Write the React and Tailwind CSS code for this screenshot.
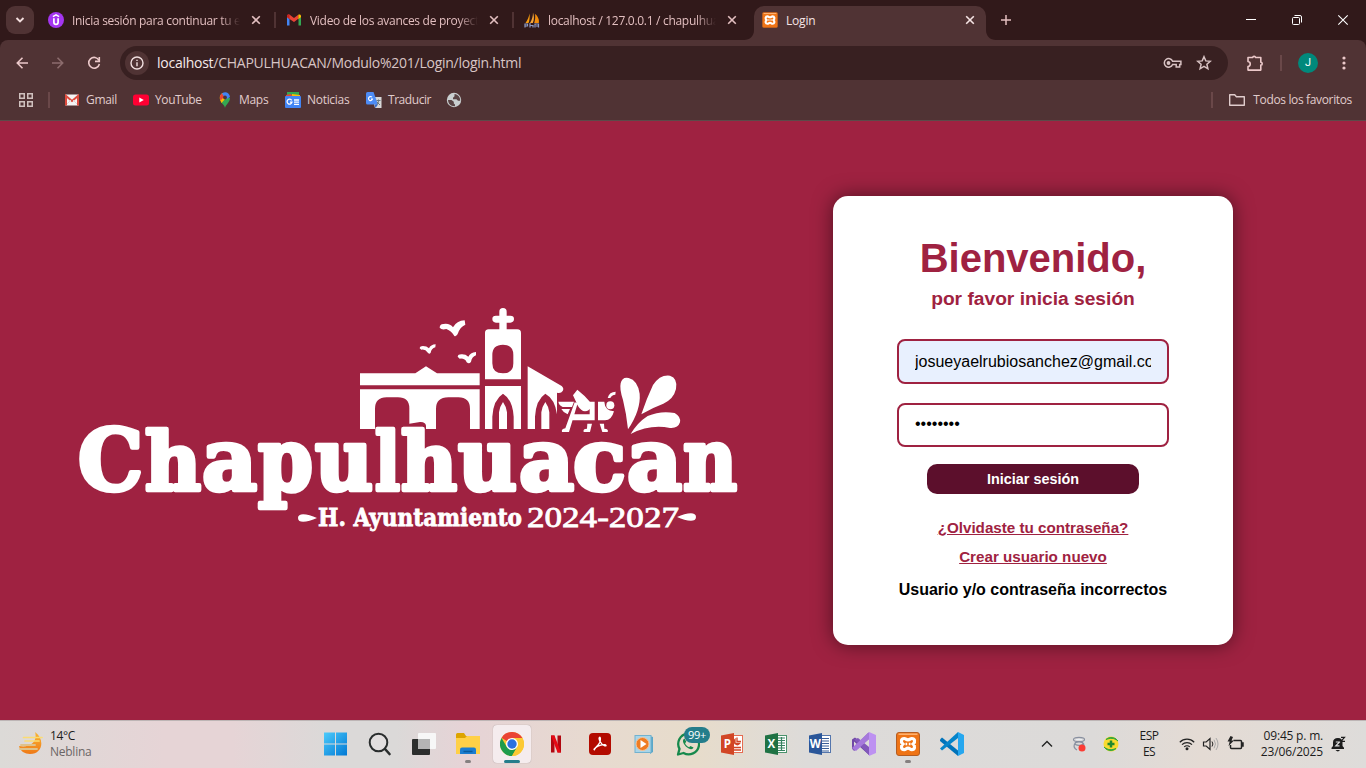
import React from "react";

function Svg({ w = 24, h = w, vb, className = "", children }) {
  return (
    <svg width={w} height={h} viewBox={vb || `0 0 ${w} ${h}`} fill="none" className={`shrink-0 ${className}`}>
      {children}
    </svg>
  );
}

/* ---------- Favicons ---------- */

const UdemyIcon = () => (
  <Svg w={16}>
    <circle cx="8" cy="8" r="8" fill="#a435f0" />
    <path d="M4.900 4.700 8 2.900l3.100 1.800" stroke="#fff" strokeWidth="1.500" />
    <path d="M5.900 6.200v4c0 1.500.8 2.200 2.100 2.200s2.100-.7 2.100-2.200v-4" stroke="#fff" strokeWidth="1.700" />
  </Svg>
);

const GmailIcon = () => (
  <Svg w={16}>
    <path d="M1 13.500h2.500V7L1 5z" fill="#4285f4" />
    <path d="M12.500 13.500H15V5l-2.500 2z" fill="#34a853" />
    <path d="M1 5.200V4c0-1.600 1.600-2 2.700-1.200L8 6l4.300-3.200v4L8 10 3.500 6.900z" fill="#ea4335" />
    <path d="M12.300 2.800C13.400 2 15 2.400 15 4v1.200l-2.700 2z" fill="#fbbc04" />
    <path d="M1 4.800 3.500 6.900V2.700C2.500 2.200 1 2.700 1 4z" fill="#c5221f" />
  </Svg>
);

const PhpMyAdminIcon = () => (
  <Svg w={16}>
    <path d="M1.500 11C3.500 8 5 5 5.500 1.500 6 5 5.500 9 4.500 11z" fill="#f89c0e" />
    <path d="M6 11C8 8 9 4 9 .5c1 3 1.500 7-.2 10.500z" fill="#f9a83a" />
    <path d="M11 2c3 2 4.500 6 3.800 9h-4.600c1-3 1.300-6 .8-9z" fill="#f28c0a" />
    <path d="M1 15.500V12h2.500v2H1.500M6 15.500V11m0 2.500h3v2M11 15.500V12h3.500v2H12M14.500 12v3.500" stroke="#8d9ac4" strokeWidth="1.200" />
  </Svg>
);

function XamppIcon({ size }) {
  return (
    <Svg w={size} vb="0 0 24 24">
      <rect x=".5" y=".5" width="23" height="23" rx="2.500" fill="#ef7416" stroke="#b45d22" />
      <path d="M2.500 2.200h19" stroke="#ffb87a" strokeWidth="1.400" />
      <path
        d="M8.200 6.500c-3 0-3.800 3.400-1.400 5.500-2.400 2.200-1.500 5.700 1.400 5.700 1.700 0 1.800-1.500 3.800-1.500s2.100 1.500 3.800 1.500c2.900 0 3.800-3.500 1.400-5.700 2.400-2.100 1.600-5.500-1.400-5.500-1.700 0-1.800 1.400-3.800 1.400S9.900 6.500 8.200 6.500z"
        stroke="#fff" strokeWidth="3.200"
      />
      <path d="M9.500 12h1.700m1.600 0h1.700" stroke="#fff" strokeWidth="2.400" />
    </Svg>
  );
}

const CloseX = ({ color }) => (
  <Svg w={10} className={color}>
    <path d="m1.200 1.200 7.600 7.600m0-7.600-7.600 7.600" stroke="currentColor" strokeWidth="1.600" />
  </Svg>
);

/* ---------- Browser chrome ---------- */

function Tab({ icon, width, last, children }) {
  return (
    <div className={`flex h-[40px] shrink-0 items-center pl-[10px] text-[#e3bfc0] ${width}`}>
      {icon}
      <div className="ml-2 w-[168px] overflow-hidden whitespace-nowrap pt-[2px] text-[12px] tracking-[-0.300px] [mask-image:linear-gradient(to_right,black_148px,transparent_168px)]">
        {children}
      </div>
      <div className="ml-[11px] flex w-[10px]">
        <CloseX color="text-[#e3bfc0]" />
      </div>
      {!last && <div className="ml-[13px] h-4 w-[2px] shrink-0 bg-[#503334]" />}
    </div>
  );
}

function TabStrip() {
  return (
    <div className="flex h-[40px] items-center bg-[#31191a]">
      <div className="ml-[6px] mr-[4px] flex h-7 w-7 shrink-0 items-center justify-center rounded-[9px] bg-[#503334]">
        <Svg w={10} h={6}>
          <path d="m1.500 1 3.500 3.500L8.500 1" stroke="#f3dede" strokeWidth="1.900" />
        </Svg>
      </div>
      <Tab width="w-[238px]" icon={<UdemyIcon />}>Inicia sesión para continuar tu experiencia</Tab>
      <Tab width="w-[238px]" icon={<GmailIcon />}>Video de los avances de proyecto</Tab>
      <Tab width="w-[230px]" icon={<PhpMyAdminIcon />} last>localhost / 127.0.0.1 / chapulhuacan</Tab>
      <div className="flex shrink-0 items-end self-end">
        <Svg w={10}><path d="M10 0v10H0C6 10 10 6 10 0z" fill="#503334" /></Svg>
        <div className="flex h-[34px] w-[232px] items-center rounded-t-[10px] bg-[#503334] pb-[6px] pl-2 text-[12px] text-[#f5e4e4]">
          <XamppIcon size={16} />
          <span className="ml-2 pt-[2px] tracking-[-0.200px]">Login</span>
          <div className="ml-auto mr-[11px]"><CloseX color="text-[#f5e4e4]" /></div>
        </div>
        <Svg w={10}><path d="M0 0v10h10C4 10 0 6 0 0z" fill="#503334" /></Svg>
      </div>
      <Svg w={12} className="ml-1">
        <path d="M6 1v10M1 6h10" stroke="#e3bfc0" strokeWidth="1.500" />
      </Svg>
      <div className="ml-auto flex">
        <div className="flex w-[46px] justify-center"><Svg w={12}><path d="M1 5.500h10" stroke="#fff" /></Svg></div>
        <div className="flex w-[46px] justify-center">
          <Svg w={12}>
            <rect x="1.500" y="3.500" width="7" height="7" rx="1" stroke="#fff" />
            <path d="M3.500 1.500H9A1.500 1.500 0 0 1 10.500 3v5.500" stroke="#fff" />
          </Svg>
        </div>
        <div className="flex w-[46px] justify-center"><Svg w={12}><path d="m1.300 1.300 9.400 9.400m0-9.400-9.400 9.400" stroke="#fff" strokeWidth="1.100" /></Svg></div>
      </div>
    </div>
  );
}

function Toolbar() {
  return (
    <div className="bg-[#31191a]">
      <div className="flex h-[40px] items-start rounded-t-[8px] bg-[#503334] pt-[6px]">
        <div className="flex h-[34px] w-[120px] items-center pl-4">
          <Svg w={12}><path d="M6.500.8 1.300 6l5.200 5.200M1.500 6H12" stroke="#ecc9ca" strokeWidth="1.600" /></Svg>
          <Svg w={12} className="ml-6"><path d="M5.500.8 10.700 6l-5.200 5.200M10.500 6H0" stroke="#8c6c6d" strokeWidth="1.600" /></Svg>
          <Svg w={14} className="ml-[23px]">
            <path d="M12 4.400A5.400 5.400 0 1 0 12.400 8" stroke="#ecc9ca" strokeWidth="1.600" />
            <path d="M12.300 1v4.400H8" stroke="#ecc9ca" strokeWidth="1.600" />
          </Svg>
        </div>
        <div className="flex h-[34px] w-[1108px] items-center rounded-full bg-[#382021] pl-[5px] pr-4">
          <div className="flex h-6 w-6 items-center justify-center rounded-full bg-[#503334]">
            <Svg w={14}>
              <circle cx="7" cy="7" r="6" stroke="#f0dfdf" strokeWidth="1.400" />
              <path d="M7 6.200V10.200M7 3.800v1.300" stroke="#f0dfdf" strokeWidth="1.400" />
            </Svg>
          </div>
          <div className="ml-2 whitespace-nowrap pb-px text-[14px] tracking-[-0.260px] text-[#d8c5c5]"><span className="text-[#f5eaea]">localhost</span>/CHAPULHUACAN/Modulo%201/Login/login.html</div>
          <Svg w={19} h={12} className="ml-auto">
            <path d="M9.600 4.300h8.300v3.200h-1.200v2.500h-3.500V7.500H9.600A4.300 4.300 0 1 1 9.600 4.300z" stroke="#d8c2c3" strokeWidth="1.500" />
            <circle cx="5.500" cy="6" r="1.900" fill="#d8c2c3" />
          </Svg>
          <Svg w={16} className="ml-[14px]">
            <path d="m8 1.700 1.800 4.200 4.500.4-3.400 3 1 4.500L8 11.400l-3.900 2.400 1-4.500-3.400-3 4.500-.4z" stroke="#d8c2c3" strokeWidth="1.500" />
          </Svg>
        </div>
        <div className="flex h-[34px] items-center pl-[18px]">
          <Svg w={18} className="-mt-px">
            <path d="M2 3.500h4.800a1.200 1.200 0 0 1 2.600 0h5.400v4.800a1.400 1.400 0 0 1 0 2.800v5H2v-3.600c3-.5 3-4.500 0-5z" stroke="#ecc9ca" strokeWidth="1.600" strokeLinejoin="round" />
          </Svg>
          <div className="ml-4 h-4 w-[2px] bg-[#6a4849]" />
          <div className="ml-4 flex h-5 w-5 items-center justify-center rounded-full bg-[#00897b] font-['Roboto',sans-serif] text-[11px] text-white">J</div>
          <Svg w={4} h={16} className="ml-6">
            <circle cx="2" cy="3" r="1.600" fill="#ecc9ca" /><circle cx="2" cy="8" r="1.600" fill="#ecc9ca" /><circle cx="2" cy="13" r="1.600" fill="#ecc9ca" />
          </Svg>
        </div>
      </div>
    </div>
  );
}

function Bookmarks() {
  return (
    <div className="flex h-[41px] items-center border-b border-[#5c4a49] bg-[#503334] pl-[18px] pr-[14px] text-[12px] text-[#e0cccc]">
      <Svg w={16}>
        <path d="M1.750 1.750h4.500v4.500h-4.500zM9.750 1.750h4.500v4.500h-4.500zM1.750 9.750h4.500v4.500h-4.500zM9.750 9.750h4.500v4.500h-4.500z" stroke="#cfc1be" strokeWidth="1.500" />
      </Svg>
      <div className="ml-[14px] h-4 w-[2px] bg-[#6a4849]" />
      <div className="flex w-[83px] items-center pl-[14px]">
        <Svg w={16}>
          <rect x="1" y="2.500" width="14" height="11" rx="1" fill="#f4f4f4" />
          <path d="M2 13.500V4l6 5 6-5v9.500" stroke="#dd4b3e" strokeWidth="2" />
          <path d="m3 12 4-4m6 4L9 8" stroke="#d8d8d8" />
        </Svg>
        <span className="ml-[6px] tracking-[-0.300px]">Gmail</span>
      </div>
      <div className="flex w-[84px] items-center">
        <Svg w={16}><rect y="2.500" width="16" height="11" rx="2.500" fill="#ff0033" /><path d="m6.300 5.500 4.500 2.500-4.500 2.500z" fill="#fff" /></Svg>
        <span className="ml-[6px] tracking-[-0.400px]">YouTube</span>
      </div>
      <div className="flex w-[68px] items-center">
        <Svg w={16}>
          <path d="M8 16c.3-3 5-5.500 5-10L8 6 4 10c2 2.500 3.500 3.500 4 6z" fill="#34a853" />
          <path d="M3.300 8.500C2 5.500 3.300 2 5.500 1l4.500 4-5.500 6z" fill="#fbbc04" />
          <path d="M3.500 8.500C2 4.500 4 2 5 1.500L8 4z" fill="#ea4335" />
          <path d="M5 1.500C8-1 12.500.5 13 5L9 7.500z" fill="#4285f4" />
          <circle cx="8" cy="5.500" r="1.900" fill="#503334" />
        </Svg>
        <span className="ml-[6px] tracking-[-0.300px]">Maps</span>
      </div>
      <div className="flex w-[81px] items-center">
        <Svg w={16}>
          <path d="M2 0h12v7H2z" fill="#34a853" /><path d="m7 2 8 1v4H7z" fill="#fbbc04" /><path d="m1 3 5-1 3 5H1z" fill="#ea4335" />
          <rect y="4" width="16" height="12" rx="1" fill="#4285f4" />
          <path d="M6.700 8.300A2.500 2.500 0 1 0 7 10.200H5M9 8h5M9 10.200h5M9 12.400h5" stroke="#fff" strokeWidth="1.300" />
        </Svg>
        <span className="ml-[6px] tracking-[-0.300px]">Noticias</span>
      </div>
      <div className="flex w-[80px] items-center">
        <Svg w={16}>
          <path d="M6 5h9.500v11H9z" fill="#d7d7d7" />
          <path d="M0 1.500Q0 0 1.500 0h6L12 12.500H1.500Q0 12.500 0 11z" fill="#4d8cf5" />
          <path d="M6 5.200A2 2 0 1 0 6.500 7H5" stroke="#fff" strokeWidth="1.100" />
          <path d="M10.500 8.500h4M12.500 7.500v1c0 2-1 3.500-2 4.500m.5-3 3 3" stroke="#687a82" />
          <path d="m8.500 12.500 1 3.500 2.500-3.500z" fill="#3569c8" />
        </Svg>
        <span className="ml-[6px] tracking-[-0.450px]">Traducir</span>
      </div>
      <Svg w={16}>
        <circle cx="8" cy="8" r="7.200" fill="#c9cfd0" />
        <path d="M2 8h3.500l2.300 1.800v1.700l1.200 1v1.700C5 14.500 2.200 12 2 8zM8.500 2v2.200L7 5.800v1.400h3.500l1.500 1.600h2.200c.2-3.300-2-6.300-5.700-6.800z" fill="#594445" />
      </Svg>
      <div className="ml-auto h-4 w-[2px] bg-[#6a4849]" />
      <Svg w={18} h={16} className="ml-[15px]">
        <path d="M1.700 2.700h5l1.700 2h7.900v8.600H1.700z" stroke="#e0cccc" strokeWidth="1.400" strokeLinejoin="round" />
      </Svg>
      <span className="ml-[7px] whitespace-nowrap tracking-[-0.350px]">Todos los favoritos</span>
    </div>
  );
}

/* ---------- Municipal logo ---------- */

const LETTERS = [
  ["C", 78, 65, 84], ["h", 145, 56, 81], ["a", 202, 55, 86], ["p", 258, 55, 86], ["u", 315, 58, 86], ["l", 375, 25, 81],
  ["h", 401, 56, 81], ["u", 458, 59, 86], ["a", 519, 55, 86], ["c", 573, 53, 86], ["a", 627, 55, 86], ["n", 683, 54, 86],
];

function Logo() {
  return (
    <svg width="680" height="240" viewBox="70 300 680 240" className="shrink-0">
      <g transform="translate(340 295) scale(.33333)" fill="#fff">
        <path d="M60 235H226L258 214 291 235H419V271H60zM60 283H419V402H390V342Q390 307 355 307H325Q288 307 288 342V402H258V392Q256 380 240 381L208 386V340Q208 307 174 307H140Q105 307 105 342V402H60z" />
        <path fillRule="evenodd" d="M446 103H478V83H468Q457 82 457 72 457 62 468 62H478V50Q478 39 489 39 500 39 500 50V62H511Q522 62 522 72 522 82 511 83H500V103H532Q543 103 543 114V253H435V114Q435 103 446 103zM457 180V205Q457 235 489 235 520 235 520 205V180Q520 149 489 149 457 149 457 180z" />
        <path fillRule="evenodd" d="M435 273H543V402H521V365Q518 314 489 296 460 314 457 365V402H435zM477 402V352Q480 333 489 321 498 333 501 352V402z" />
        <path d="M563 214 665 273Q673 280 668 288 663 296 651 293V358Q645 312 616 296 588 314 585 365V402H563zM604 402V352Q607 333 616 321 625 333 628 352V402z" />
        <path d="M299 98Q299 88 310 87 330 84 339 97 350 77 374 76L376 89Q360 96 354 115 350 126 343 123 335 108 319 102 305 106 299 98zM239 160Q240 153 249 153 260 153 267 160 272 149 287 148L286 157Q274 161 272 173 268 180 262 172 257 162 244 164zM353 185Q354 178 364 178 376 177 385 185 390 173 408 171L408 181Q396 185 393 200 388 209 380 202 375 189 359 191z" />
        <path d="M842 265Q846 245 866 249 893 256 899 296 903 345 864 403 859 355 849 315 838 282 842 265zM904 358Q920 310 939 270 960 238 990 242 1014 250 1008 282 1001 312 970 326 937 338 904 358zM872 417Q893 382 923 363 962 346 1004 354 1023 365 1020 382 1014 401 990 399 930 387 872 417z" />
        <path d="M655 320H702L696 336H668Q657 331 655 320zM664 342H690L683 358Q670 353 664 342zM712 284Q733 300 751 322V336Q748 349 735 349 723 348 714 333L699 301zM697 358H764V376H692zM749 320H764V364H749zM774 320H793Q794 346 822 349 815 376 795 376H774zM803 309Q808 290 827 290L826 299Q815 300 811 309zM704 322 713 325 687 411H666Q663 402 676 400zM742 386H756L750 411H731Q728 401 741 401zM779 386H792L793 401Q807 402 803 411H787z" />
        <circle cx="811" cy="331" r="12" />
      </g>
      <g fill="#fff" stroke="#fff" strokeWidth="4.500" strokeLinejoin="round" className="font-['DejaVu_Serif',serif] font-bold">
        {LETTERS.map(([ch, x, w, size], i) => (
          <text key={i} x={x} y="490" fontSize={size} textLength={w} lengthAdjust="spacingAndGlyphs">{ch}</text>
        ))}
      </g>
      <text x="318" y="525.500" fontSize="24" textLength="204" lengthAdjust="spacingAndGlyphs" fill="#fff" stroke="#fff" strokeWidth=".8" className="font-['DejaVu_Serif',serif] font-bold">H. Ayuntamiento</text>
      <text x="527" y="527" fontSize="30" textLength="152" lengthAdjust="spacingAndGlyphs" fill="#fff" stroke="#fff" strokeWidth=".8" className="font-['Liberation_Serif',serif]">2024-2027</text>
      <path d="M317 518C308 514 298 512 298 518S308 522 317 518zM677 517C686 513 696 511 696 517S686 521 677 517z" fill="#fff" />
    </svg>
  );
}

/* ---------- Login page ---------- */

function LoginPage() {
  return (
    <main className="flex h-[599px] items-start overflow-hidden bg-[#9f2241] font-['Liberation_Sans',Arial,sans-serif]">
      <div className="w-[833px] pl-[70px] pt-[179px]"><Logo /></div>
      <section className="mt-[75px] flex h-[449px] w-[400px] flex-col items-center rounded-[15px] bg-white pt-[39px] text-[#9f2241] shadow-[0_0_20px_rgba(0,0,0,0.5)]">
        <h1 className="text-[40px] font-bold leading-[46px]">Bienvenido,</h1>
        <h3 className="mt-[7px] text-[19.200px] font-bold leading-[22px]">por favor inicia sesión</h3>
        <div className="mt-[29px] flex h-[45px] w-[272px] items-center rounded-[8px] border-2 border-[#9f2241] bg-[#e8f0fe] px-4 text-[16px] text-black">
          <div className="overflow-hidden whitespace-nowrap">josueyaelrubiosanchez@gmail.com</div>
        </div>
        <div className="mt-[19px] flex h-[44px] w-[272px] items-center rounded-[8px] border-2 border-[#9f2241] px-4 pb-[2px] text-[16px] text-black">••••••••</div>
        <button className="mt-[17px] h-[30px] w-[212px] rounded-[10px] bg-[#5c0f2c] text-[14.400px] font-bold leading-[30px] text-white">Iniciar sesión</button>
        <a className="mt-[25px] text-[15.200px] font-bold leading-[18px] underline">¿Olvidaste tu contraseña?</a>
        <a className="mt-[11px] text-[15.200px] font-bold leading-[18px] underline">Crear usuario nuevo</a>
        <p className="mt-[15px] text-[16px] font-bold leading-[18px] text-black">Usuario y/o contraseña incorrectos</p>
      </section>
    </main>
  );
}

/* ---------- Taskbar ---------- */

function OfficeIcon({ letter, color, dark, children }) {
  return (
    <Svg w={24}>
      <rect x="11" y="3.500" width="11.500" height="17" fill="#fff" stroke={color} />
      {children}
      <path d="M1 3.500 14 1v22L1 20.500z" fill={dark} />
      <text x="7.400" y="16" textAnchor="middle" fontSize="11.500" fill="#fff" className="font-['Open_Sans',sans-serif] font-bold">{letter}</text>
    </Svg>
  );
}

function Slot({ active, dot, children }) {
  return (
    <div className="flex w-11 justify-center">
      <div className={`relative flex h-[38px] w-[38px] items-center justify-center rounded-[4px] ${active ? "bg-[#f5ecee] shadow-[0_0_1px_rgba(0,0,0,0.350)]" : ""}`}>
        {children}
        {active && <div className="absolute bottom-0 h-[3px] w-4 rounded-full bg-[#247d8b]" />}
        {dot && <div className="absolute bottom-0 h-[3px] w-[6px] rounded-full bg-[#858080]" />}
      </div>
    </div>
  );
}

function Taskbar() {
  return (
    <footer className="flex h-[48px] items-center border-t border-[#bdb5b5] bg-[linear-gradient(90deg,#dcdad7_0%,#e6d4d6_12%,#e6d4d6_17%,#dbd9d8_24%,#dbd9d8_29%,#e6d3d6_34%,#e7dacf_44%,#e7dccb_51%,#dddbd9_59%,#dcdad9_80%,#e4dbd4_88%,#dedcda_100%)] pb-px text-[#1c1c1c]">
      <div className="flex w-[314px] items-center pl-[18px]">
        <Svg w={26}>
          <defs><linearGradient id="moon" x1="0" y1="0" x2="0" y2="1"><stop stopColor="#f9b633" /><stop offset="1" stopColor="#ef7917" /></linearGradient></defs>
          <path d="M17 1c10 7 8 22-5 22C7 23 2 20 1 15c11 2 19-4 16-14z" fill="url(#moon)" />
          <path d="M5.500 6.500H24M7 10h14" stroke="#fbdc72" strokeWidth="1.700" strokeLinecap="round" />
          <path d="M3 14h14M2 18h17" stroke="#dfc28a" strokeWidth="1.900" strokeLinecap="round" />
        </Svg>
        <div className="-mt-px ml-[6px] text-[12px] leading-[16px]">
          <div className="tracking-[-0.400px]">14°C</div>
          <div className="tracking-[-0.250px] text-[#6b6666]">Neblina</div>
        </div>
      </div>
      <Slot>
        <Svg w={24}>
          <defs><linearGradient id="win" x1="0" y1="0" x2="1" y2="1"><stop stopColor="#4ccbfb" /><stop offset="1" stopColor="#0078d4" /></linearGradient></defs>
          <path d="M0 .5h11v11H0zM12 .5h11v11H12zM0 12.500h11v11H0zM12 12.500h11v11H12z" fill="url(#win)" />
        </Svg>
      </Slot>
      <Slot>
        <Svg w={24}><circle cx="10.500" cy="10.500" r="8.800" fill="#e2dfdf" stroke="#292d2d" strokeWidth="2" /><path d="m17 17 4.500 5" stroke="#292d2d" strokeWidth="2.600" strokeLinecap="round" /></Svg>
      </Slot>
      <Slot>
        <Svg w={24}><rect y="7" width="18" height="16" rx="1" fill="#2c2e2d" /><rect x="6" y="1" width="18" height="16" rx="1" fill="#f7f7f7" /><path d="M6 7h12v10H6z" fill="#b4b4b4" /></Svg>
      </Slot>
      <Slot dot>
        <Svg w={24}>
          <path d="M0 2.500Q0 1 1.500 1H8l2 3h14v17.500H0z" fill="#dda400" />
          <path d="M0 6h9l2-2h13v18H0z" fill="#ffd047" />
          <path d="M4 22v-4.500Q4 15.500 6 15.500h12q2 0 2 2V22z" fill="#1b7dd0" /><path d="M7.500 19.500h9" stroke="#095a9d" strokeWidth="1.500" />
        </Svg>
      </Slot>
      <Slot active>
        <Svg w={24} vb="0 0 24 24">
          <circle cx="12" cy="12" r="12" fill="#fcc934" />
          <path d="M12 12 1.600 6A12 12 0 0 1 22.400 6H12z" fill="#ea4335" />
          <path d="M12 24A12 12 0 0 1 1.600 6l5.200 9 5.200 3 5.200-3z" fill="#1e9b4c" />
          <path d="M12 24 17.200 15 18 10 12 6h10.400A12 12 0 0 1 12 24z" fill="#fcc934" />
          <circle cx="12" cy="12" r="6" fill="#fff" /><circle cx="12" cy="12" r="4.700" fill="#2b70df" />
        </Svg>
      </Slot>
      <Slot>
        <Svg w={24}><path d="M7 3.500h3.500v17H7zM13.500 3.500H17v17h-3.500z" fill="#b00710" /><path d="M7 3.500h3.500l6.500 17h-3.500z" fill="#e50914" /></Svg>
      </Slot>
      <Slot>
        <Svg w={24}>
          <rect x="1" y="1" width="22" height="22" rx="4" fill="#b30b00" />
          <path d="M6.300 17.800c-1.500-1 4-3.300 5.400-7.300C12.800 7 12.500 5 11.600 5.300c-1.500 1 1 7.200 5.200 8.500 2 .5 1.500-1.200-.5-1.100-4 .3-8.500 2.100-10 5.100z" stroke="#fff" strokeWidth="1.300" />
        </Svg>
      </Slot>
      <Slot>
        <Svg w={24}>
          <path d="m18 4 3 1v15l-3 2z" fill="#5ba7c8" /><rect x="3" y="3.500" width="16" height="17" fill="#a9d5e8" stroke="#72b2cf" />
          <circle cx="10.500" cy="12" r="6.500" fill="#ef7c22" stroke="#f8c296" /><path d="m8.500 8 6 4-6 4z" fill="#fff" />
        </Svg>
      </Slot>
      <Slot>
        <Svg w={24}>
          <path d="m2 22.500 1.500-5.600A10.400 10.400 0 1 1 7.500 21z" stroke="#16894c" strokeWidth="2.300" strokeLinejoin="round" />
          <path d="M8.500 6.500c-3.500 2-.2 6.500 2 8.500s6 3.500 7 .5l-3-1.500-1.400 1.300c-2-.8-3.500-2.300-4-4l1.200-1.500z" fill="#16894c" />
        </Svg>
        <div className="absolute left-[15px] top-[2px] flex h-4 w-[26px] items-center justify-center rounded-full bg-[#247d8b] text-[11px] leading-4 tracking-[-0.300px] text-white">99+</div>
      </Slot>
      <Slot>
        <OfficeIcon letter="P" color="#e56c52" dark="#d24625">
          <path d="M17 5.500v4h4M15 7.500a3 3 0 1 0 4.500 4H15zM14 15.500h7M14 18h7" stroke="#d24625" strokeWidth="1.300" />
        </OfficeIcon>
      </Slot>
      <Slot>
        <OfficeIcon letter="X" color="#4a936c" dark="#1f7244">
          <path d="M14 6h7M14 8.500h7M14 11h7M14 13.500h7M14 16h7M14 18.500h7M17.500 5v14" stroke="#378260" strokeWidth="1.200" />
        </OfficeIcon>
      </Slot>
      <Slot>
        <OfficeIcon letter="W" color="#5576ad" dark="#2a5699">
          <path d="M14 6.500h7M14 9h7M14 11.500h7M14 14h7M14 16.500h7M14 19h7" stroke="#3b5e98" strokeWidth="1.200" />
        </OfficeIcon>
      </Slot>
      <Slot>
        <Svg w={24}>
          <path d="M0 7.500 3 5.500l14 11.500v6L2 9.500v6l-2 2z" fill="#7048a6" />
          <path d="m0 16.500 2 2.500 4-2.500L17 7V1h-1L2 15zM2 7.500 6 6l11 9v8z" fill="#8258bb" />
          <path d="m17 0 7 3v18l-7 3z" fill="#bd91f1" /><path d="M0 16 17 0v7L4 19z" fill="#a679dc" />
        </Svg>
      </Slot>
      <Slot dot><XamppIcon size={24} /></Slot>
      <Slot>
        <Svg w={24}>
          <path d="m0 7.500 2-2 16 13V24L0 9z" fill="#0073ba" /><path d="M0 16.500 18 0v6L2 18.500z" fill="#0584ca" /><path d="m18 0 6 3v18l-6 3z" fill="#26a7ef" />
        </Svg>
      </Slot>
      <div className="ml-auto flex items-center pr-[20px]">
        <Svg w={12} h={8} className="mr-[18px]"><path d="m1 6.500 5-5 5 5" stroke="#222" strokeWidth="1.400" /></Svg>
        <Svg w={16} className="mr-4">
          <path d="M2.500 3.500c0-2.800 11-2.800 11 0s-11 2.800-11 0zM4 7.500c0-2.500 8-2.500 8 0s-8 2.500-8 0zM6 14c-5-3-3-8 2-8s6 3 4 6" stroke="#8990a0" strokeWidth="1.200" /><path d="M5 3.500h6" stroke="#e9edf2" /><circle cx="11" cy="12" r="3.500" fill="#fb3c34" />
        </Svg>
        <Svg w={16}>
          <circle cx="8" cy="8" r="7.500" fill="#f9db2f" /><path d="M3 3.500A8 8 0 0 1 15 5C11 1.500 7 2 3 3.500zM13 12.500A8 8 0 0 1 1 11C5 14.500 9 14 13 12.500z" fill="#34a83d" stroke="#34a83d" />
          <path d="M8 4.500v7M4.500 8h7" stroke="#21892f" strokeWidth="2.500" />
        </Svg>
        <div className="ml-2 w-11 text-center text-[12px] leading-[16px] tracking-[-0.500px]">ESP<br />ES</div>
        <Svg w={16} className="ml-2">
          <path d="M.8 6.200a10.200 10.200 0 0 1 14.400 0M3 8.600a7.100 7.100 0 0 1 10 0M5.200 10.900a4 4 0 0 1 5.600 0" stroke="#222" strokeWidth="1.200" /><circle cx="8" cy="12.800" r="1.500" fill="#222" />
        </Svg>
        <Svg w={17} h={16} className="ml-[7px]">
          <path d="M1.500 6h2.700L8 2.500v11L4.200 10H1.500z" stroke="#222" strokeWidth="1.200" /><path d="M10 5.500q1.800 2.500 0 5" stroke="#222" /><path d="M12 3.700q3 4.300 0 8.600M14 2q4 6 0 12" stroke="#aaa" />
        </Svg>
        <Svg w={17} h={16} className="ml-2">
          <path d="M6.500 4.500h7q1 0 1 1v6q0 1-1 1h-9q-1 0-1-1V9M15 7h1v3h-1" stroke="#222" strokeWidth="1.500" /><path d="m3.500 0-3 5.500h2.200L1.500 10 7 4.500H4.500L6 1z" fill="#222" />
        </Svg>
        <div className="-mt-px ml-[13px] w-[66px] whitespace-nowrap text-right text-[12px] leading-[16px]">
          <div className="-ml-2 tracking-[-0.200px]">09:45 p. m.</div>
          <div className="-ml-2 tracking-[-0.150px]">23/06/2025</div>
        </div>
        <Svg w={15} h={16} className="ml-2">
          <path d="M.5 13v-1.200L2 10V6.500Q2 2 7 2q4.500 0 4.500 4.500V10l1.500 1.800V13zM4.500 14h4.500q-2 2.800-4.500 0z" fill="#1c1c1c" />
          <path d="M4.800 6h3.700L4.800 9.800h3.700" stroke="#ddd" strokeWidth="1.200" /><path d="M10 1.300h3.500l-3.500 4h4" stroke="#1c1c1c" strokeWidth="1.200" />
        </Svg>
      </div>
    </footer>
  );
}

export default function App() {
  return (
    <div className="h-[768px] w-[1366px] overflow-hidden font-['Open_Sans','Noto_Sans',sans-serif]">
      <TabStrip />
      <Toolbar />
      <Bookmarks />
      <LoginPage />
      <Taskbar />
    </div>
  );
}
